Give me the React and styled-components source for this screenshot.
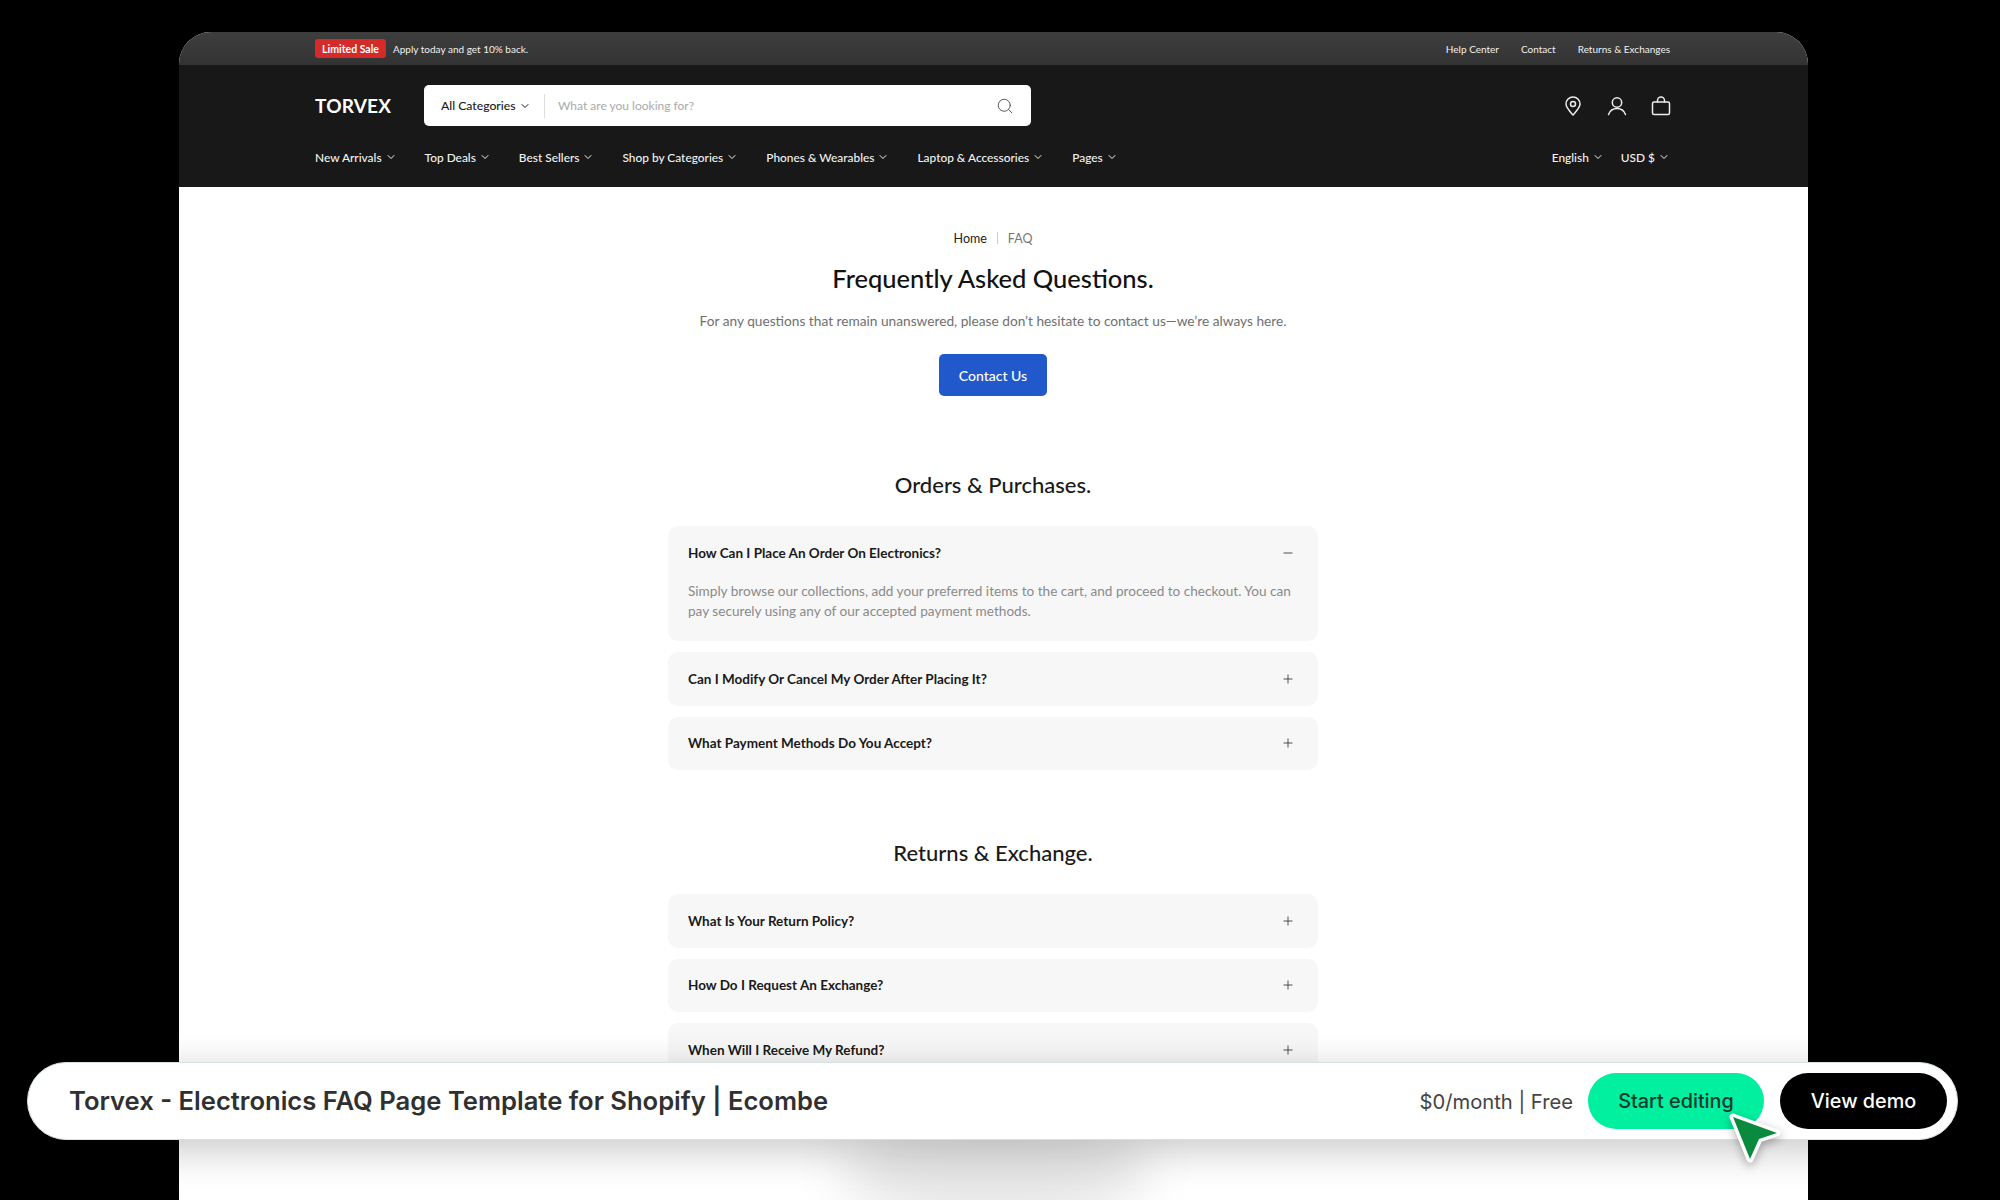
import React from 'react';
import styled, { createGlobalStyle } from 'styled-components';
import { ChevronDown, Search, Plus, Minus } from 'lucide-react';

const Global = createGlobalStyle`
  html, body { margin: 0; padding: 0; background: #000; height: 1200px; overflow: hidden; }
  * { box-sizing: border-box; }
`;

const Stage = styled.div`
  position: relative;
  width: 2000px;
  height: 1200px;
  overflow: hidden;
  background: #000;
  padding: 32px 192px 0 179px;
  font-family: Lato, "Liberation Sans", sans-serif;
`;

const Win = styled.div`
  width: 1629px;
  height: 1168px;
  background: #fff;
  border-radius: 32px 32px 0 0;
  overflow: hidden;
`;

const TopBar = styled.div`
  height: 33px;
  background: linear-gradient(#3e3e3e, #333);
  display: flex;
  align-items: center;
  justify-content: space-between;
  padding: 0 138px 0 136px;
  color: #f0f0f0;
  font-size: 10px;
`;
const Promo = styled.div`display: flex; align-items: center; gap: 7px;`;
const Badge = styled.span`
  background: #d42a2a;
  color: #fff;
  border-radius: 3px;
  height: 19px;
  width: 71px;
  display: flex;
  align-items: center;
  justify-content: center;
  font-size: 10.5px;
  font-weight: 700;
`;
const TopLinks = styled.div`display: flex; gap: 22px;`;

const Header = styled.header`
  background: #181818;
  height: 122px;
  padding: 20px 138px 0 136px;
  color: #fff;
`;
const MainRow = styled.div`display: flex; align-items: center; height: 41px;`;
const Logo = styled.div`
  width: 109px;
  font-size: 19px;
  font-weight: 700;
  letter-spacing: 0.2px;
`;
const SearchBox = styled.div`
  width: 607px;
  height: 41px;
  background: #fff;
  border-radius: 5px;
  display: flex;
  align-items: center;
  padding: 0 17px;
  color: #1a1a1a;
`;
const CatSelect = styled.div`
  display: flex;
  align-items: center;
  gap: 3px;
  width: 104px;
  height: 24px;
  font-size: 12.2px;
  font-weight: 500;
  border-right: 1px solid #ddd;
`;
const Placeholder = styled.div`
  flex: 1;
  padding-left: 13px;
  font-size: 12px;
  color: #aaa;
`;
const SearchIcon = styled(Search)`color: #555;`;
const IconGroup = styled.div`
  margin-left: auto;
  margin-right: -1px;
  display: flex;
  gap: 24px;
  align-items: center;
`;
const HeadIcon = styled.svg`
  width: 20px;
  height: 20px;
  fill: none;
  stroke: #ececec;
  stroke-width: 1.5;
  stroke-linecap: round;
  stroke-linejoin: round;
`;
const NavRow = styled.nav`
  display: flex;
  justify-content: space-between;
  align-items: center;
  margin-top: 19px;
  height: 24px;
`;
const NavList = styled.div`display: flex; gap: 28px;`;
const NavRight = styled.div`display: flex; gap: 17px;`;
const NavItem = styled.div`
  display: flex;
  align-items: center;
  gap: 3px;
  font-size: 11.9px;
  font-weight: 500;
  color: #f2f2f2;
`;

const Main = styled.main`
  display: flex;
  flex-direction: column;
  align-items: center;
  padding-right: 1px;
`;
const Crumbs = styled.div`
  display: flex;
  align-items: center;
  margin-top: 42px;
  height: 18px;
  font-size: 12.5px;
  color: #222;
`;
const CrumbSep = styled.span`
  width: 1px;
  height: 12px;
  background: #ccc;
  margin: 0 10px;
`;
const CrumbNow = styled.span`color: #777;`;
const Title = styled.h1`
  margin: 13px 0 0;
  font-size: 25.5px;
  line-height: 36px;
  font-weight: 500;
  color: #111;
`;
const Sub = styled.p`
  margin: 15px 0 0;
  font-size: 13.7px;
  line-height: 20px;
  color: #6f6f6f;
`;
const CTA = styled.div`
  margin-top: 23px;
  width: 108px;
  height: 42px;
  border-radius: 5px;
  background: #2159cc;
  color: #fff;
  font-size: 14px;
  font-weight: 500;
  display: flex;
  align-items: center;
  justify-content: center;
`;
const SectionTitle = styled.h2`
  margin: ${(p) => p.$top}px 0 26px;
  font-size: 22px;
  line-height: 30px;
  font-weight: 500;
  color: #1a1a1a;
`;
const List = styled.div`
  width: 650px;
  display: flex;
  flex-direction: column;
  gap: 11px;
`;
const Item = styled.div`
  background: #f7f7f7;
  border-radius: 10px;
  padding: 0 23px 0 20px;
`;
const Question = styled.div`
  height: 53.5px;
  display: flex;
  align-items: center;
  justify-content: space-between;
  font-size: 13.5px;
  font-weight: 700;
  color: #1a1a1a;
`;
const Answer = styled.p`
  margin: 1px 0 0;
  padding-bottom: 20.5px;
  font-size: 13.6px;
  line-height: 20px;
  color: #8a8a8a;
`;
const ToggleIcon = styled.span`
  display: flex;
  color: #444;
`;

const Blob = styled.div`
  position: absolute;
  left: 840px;
  top: 1120px;
  width: 310px;
  height: 100px;
  border-radius: 50%;
  background: rgba(0, 0, 0, 0.1);
  filter: blur(24px);
`;
const Bar = styled.div`
  position: absolute;
  left: 27px;
  top: 1062px;
  width: 1931px;
  height: 78px;
  border-radius: 39px;
  background: #fff;
  border: 1px solid #d5e3df;
  box-shadow: 0 10px 40px rgba(0, 0, 0, 0.22);
  display: flex;
  align-items: center;
  padding: 0 10px 0 41px;
  font-family: Inter, "Liberation Sans", sans-serif;
`;
const BarTitle = styled.div`
  flex: 1;
  padding-bottom: 1px;
  font-size: 25.6px;
  font-weight: 600;
  color: #303030;
`;
const Price = styled.div`
  font-size: 20.2px;
  color: #444;
  margin-right: 15px;
`;
const PillGreen = styled.div`
  width: 176px;
  height: 56px;
  border-radius: 28px;
  background: #00f0a0;
  color: #0b3b2c;
  font-size: 19.8px;
  font-weight: 500;
  display: flex;
  align-items: center;
  justify-content: center;
`;
const PillDark = styled(PillGreen)`
  width: 167px;
  margin-left: 16px;
  background: #000;
  color: #fff;
`;
const Cursor = styled.svg`
  position: absolute;
  left: 1726px;
  top: 1110px;
  filter: drop-shadow(0 3px 5px rgba(0, 0, 0, 0.3));
`;

const nav = ['New Arrivals', 'Top Deals', 'Best Sellers', 'Shop by Categories', 'Phones & Wearables', 'Laptop & Accessories', 'Pages'];
const orders = ['Can I Modify Or Cancel My Order After Placing It?', 'What Payment Methods Do You Accept?'];
const returns = ['What Is Your Return Policy?', 'How Do I Request An Exchange?', 'When Will I Receive My Refund?'];

const Nav = ({ label }) => (
  <NavItem>
    {label}
    <ChevronDown size={12} strokeWidth={2} />
  </NavItem>
);
const Q = ({ label, open }) => (
  <Question>
    {label}
    <ToggleIcon>{open ? <Minus size={14} strokeWidth={1.6} /> : <Plus size={14} strokeWidth={1.6} />}</ToggleIcon>
  </Question>
);

export default function App() {
  return (
    <Stage>
      <Global />
      <Win>
        <TopBar>
          <Promo>
            <Badge>Limited Sale</Badge>
            <span>Apply today and get 10% back.</span>
          </Promo>
          <TopLinks>
            <span>Help Center</span>
            <span>Contact</span>
            <span>Returns &amp; Exchanges</span>
          </TopLinks>
        </TopBar>
        <Header>
          <MainRow>
            <Logo>TORVEX</Logo>
            <SearchBox>
              <CatSelect>
                All Categories
                <ChevronDown size={12} strokeWidth={2} />
              </CatSelect>
              <Placeholder>What are you looking for?</Placeholder>
              <SearchIcon size={18} strokeWidth={1.3} />
            </SearchBox>
            <IconGroup>
              <HeadIcon viewBox="0 0 20 20">
                <path d="M10 19C6.5 15 3 11.5 3 8a7 7 0 0 1 14 0c0 3.5-3.5 7-7 11Z" />
                <circle cx="10" cy="8" r="2.5" />
              </HeadIcon>
              <HeadIcon viewBox="0 0 20 20">
                <circle cx="10" cy="6.5" r="4.7" />
                <path d="M1.5 18.5C3 14.5 6 12.5 10 12.5s7 2 8.5 6" />
              </HeadIcon>
              <HeadIcon viewBox="0 0 20 20">
                <rect x="1.5" y="6" width="17" height="12.5" rx="1.5" />
                <path d="M6.5 6V4.5a3.5 3.5 0 0 1 7 0V6" />
              </HeadIcon>
            </IconGroup>
          </MainRow>
          <NavRow>
            <NavList>
              {nav.map((n) => <Nav key={n} label={n} />)}
            </NavList>
            <NavRight>
              <Nav label="English" />
              <Nav label="USD $" />
            </NavRight>
          </NavRow>
        </Header>
        <Main>
          <Crumbs>
            <span>Home</span>
            <CrumbSep />
            <CrumbNow>FAQ</CrumbNow>
          </Crumbs>
          <Title>Frequently Asked Questions.</Title>
          <Sub>For any questions that remain unanswered, please don’t hesitate to contact us—we’re always here.</Sub>
          <CTA>Contact Us</CTA>
          <SectionTitle $top={74}>Orders &amp; Purchases.</SectionTitle>
          <List>
            <Item>
              <Q label="How Can I Place An Order On Electronics?" open />
              <Answer>Simply browse our collections, add your preferred items to the cart, and proceed to checkout. You can pay securely using any of our accepted payment methods.</Answer>
            </Item>
            {orders.map((q) => <Item key={q}><Q label={q} /></Item>)}
          </List>
          <SectionTitle $top={68}>Returns &amp; Exchange.</SectionTitle>
          <List>
            {returns.map((q) => <Item key={q}><Q label={q} /></Item>)}
          </List>
        </Main>
      </Win>
      <Blob />
      <Bar>
        <BarTitle>Torvex - Electronics FAQ Page Template for Shopify | Ecombe</BarTitle>
        <Price>$0/month | Free</Price>
        <PillGreen>Start editing</PillGreen>
        <PillDark>View demo</PillDark>
      </Bar>
      <Cursor width="60" height="62" viewBox="0 0 60 62">
        <path d="M7 7 L51 23 L33 29 L24 49 Z" fill="#0a8a3c" stroke="#fff" strokeWidth="7" strokeLinejoin="round" paintOrder="stroke" />
      </Cursor>
    </Stage>
  );
}
